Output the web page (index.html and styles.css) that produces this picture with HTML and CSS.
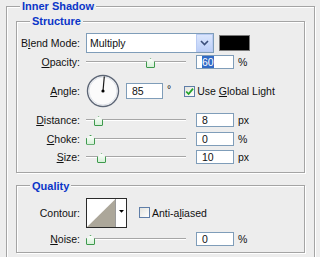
FILE: index.html
```html
<!DOCTYPE html>
<html lang="en">
<head>
    <meta charset="UTF-8">
    <title>Inner Shadow</title>
    <link rel="stylesheet" href="styles.css">
</head>
<body>
    <fieldset class="panel">
        <legend>Inner Shadow</legend>

        <fieldset class="group">
            <legend>Structure</legend>
            <div class="row row-blend">
                <span class="label">B<u>l</u>end Mode:</span>
                <div class="select">
                    <span class="select-text">Multiply</span>
                    <span class="select-btn">
                        <svg width="9" height="6" viewBox="0 0 9 6"><path d="M1 1 L4.5 4.5 L8 1" fill="none" stroke="#3b4f7a" stroke-width="1.6"/></svg>
                    </span>
                </div>
                <span class="swatch"></span>
            </div>
            <div class="row">
                <span class="label"><u>O</u>pacity:</span>
                <div class="slider"><span class="thumb" style="left:60%"></span></div>
                <span class="field"><span class="sel">60</span></span>
                <span class="unit">%</span>
            </div>
            <div class="row row-angle">
                <span class="label"><u>A</u>ngle:</span>
                <svg class="dial" width="34" height="34" viewBox="0 0 34 34">
                    <circle cx="17" cy="17" r="15.5" fill="#fbfbfb" stroke="#5d6676" stroke-width="1.4"/>
                    <circle cx="17" cy="17" r="14" fill="none" stroke="#dde1e8" stroke-width="1"/>
                    <line x1="17" y1="17" x2="18.3" y2="2.5" stroke="#1a1a1a" stroke-width="1.2"/>
                    <circle cx="17" cy="17" r="1.6" fill="#000"/>
                </svg>
                <span class="field field-angle">85</span>
                <span class="deg">°</span>
                <span class="check check-global">
                    <span class="box"><svg width="9" height="9" viewBox="0 0 9 9"><path d="M1.2 4.5 L3.6 7 L8 1.6" fill="none" stroke="#22a32a" stroke-width="1.8"/></svg></span>
                    <span>Use <u>G</u>lobal Light</span>
                </span>
            </div>
            <div class="row">
                <span class="label"><u>D</u>istance:</span>
                <div class="slider"><span class="thumb" style="left:8%"></span></div>
                <span class="field">8</span>
                <span class="unit">px</span>
            </div>
            <div class="row">
                <span class="label"><u>C</u>hoke:</span>
                <div class="slider"><span class="thumb" style="left:0%"></span></div>
                <span class="field">0</span>
                <span class="unit">%</span>
            </div>
            <div class="row">
                <span class="label"><u>S</u>ize:</span>
                <div class="slider"><span class="thumb" style="left:11%"></span></div>
                <span class="field">10</span>
                <span class="unit">px</span>
            </div>
        </fieldset>

        <fieldset class="group group-quality">
            <legend>Quality</legend>
            <div class="row row-contour">
                <span class="label">Contour:</span>
                <svg class="contour" width="41" height="30" viewBox="0 0 41 30">
                    <rect x="0.5" y="0.5" width="40" height="29" fill="#fff" stroke="#2a2a2a"/>
                    <polygon points="1,29 29.5,1 29.5,29" fill="#aca79a"/>
                    <line x1="29.5" y1="1" x2="29.5" y2="29" stroke="#9a9a9a"/>
                    <polygon points="33,12 38,12 35.5,14.8" fill="#000"/>
                </svg>
                <span class="check check-anti">
                    <span class="box"></span>
                    <span>Anti-a<u>l</u>iased</span>
                </span>
            </div>
            <div class="row row-noise">
                <span class="label"><u>N</u>oise:</span>
                <div class="slider"><span class="thumb" style="left:0%"></span></div>
                <span class="field">0</span>
                <span class="unit">%</span>
            </div>
        </fieldset>
    </fieldset>
</body>
</html>
```

FILE: styles.css
```css
body {
    margin: 0;
    background: #ededed;
    font-family: "Liberation Sans", Arial, sans-serif;
    font-size: 10.5px;
    color: #111;
}

fieldset {
    min-width: 0;
    border: 1px solid #a4a4a4;
    box-shadow: inset 1px 1px 0 #fff, 1px 1px 0 #fff;
}

legend {
    padding: 0 2px;
    margin-left: 4px;
    font-size: 11px;
    font-weight: bold;
    line-height: 12px;
    color: #0a35c8;
    background: #ededed;
}

.panel {
    margin: 0 5px 0 6px;
    padding: 3px 9px 10px;
}

.group {
    margin: 0;
    padding: 6px 0 5px 2px;
}

.group legend {
    margin-left: 11px;
}

.group-quality {
    margin-top: 7px;
    padding-bottom: 3px;
}

.row {
    display: flex;
    align-items: center;
    height: 18.5px;
}

.row-blend {
    height: 20px;
}

.row-angle {
    height: 39.5px;
}

.row-contour {
    height: 30px;
}

.row-noise {
    height: 19px;
    margin-top: 2px;
}

.label {
    flex: none;
    width: 61px;
    margin-right: 6px;
    text-align: right;
    white-space: nowrap;
}

.select {
    display: flex;
    align-items: center;
    width: 128px;
    height: 20px;
    box-sizing: border-box;
    border: 1px solid #7f9db9;
    background: #fff;
}

.select-text {
    flex: 1;
    padding-left: 3px;
}

.select-btn {
    display: flex;
    align-items: center;
    justify-content: center;
    width: 17px;
    height: 18px;
    box-sizing: border-box;
    border: 1px solid #b9cbf3;
    background: linear-gradient(#dbe6fd, #bccff8);
}

.swatch {
    width: 31px;
    height: 16px;
    box-sizing: border-box;
    margin-left: 5px;
    border: 1px solid #7a7a7a;
    background: #000;
}

.slider {
    position: relative;
    flex: none;
    width: 100px;
    height: 1px;
    margin-right: 10px;
    background: #a6a6a6;
    border-bottom: 1px solid #fff;
}

.thumb {
    position: absolute;
    top: -3px;
    width: 9px;
    height: 10px;
    background: linear-gradient(#fbfffb, #d6efd8);
    border: 1px solid #3d9a4c;
    box-sizing: border-box;
    clip-path: polygon(0 100%, 0 40%, 50% 0, 100% 40%, 100% 100%);
    border-radius: 0 0 1px 1px;
}

.field {
    flex: none;
    width: 38px;
    height: 14px;
    box-sizing: border-box;
    padding-left: 5px;
    border: 1px solid #7f9db9;
    background: #fff;
    line-height: 12px;
}

.field-angle {
    width: 37px;
    height: 16px;
    margin-left: 6px;
    line-height: 14px;
}

.sel {
    background: #316ac5;
    color: #fff;
}

.unit {
    margin-left: 4px;
}

.deg {
    align-self: flex-start;
    margin: 11px 0 0 4px;
}

.check {
    display: flex;
    align-items: center;
    white-space: nowrap;
}

.check-global {
    margin-left: 13px;
}

.check-anti {
    margin-left: 12px;
}

.box {
    display: flex;
    align-items: center;
    justify-content: center;
    width: 11px;
    height: 11px;
    box-sizing: border-box;
    margin-right: 2px;
    border: 1px solid #5f7ea8;
    background: linear-gradient(135deg, #e4e4de, #fff);
}
```
